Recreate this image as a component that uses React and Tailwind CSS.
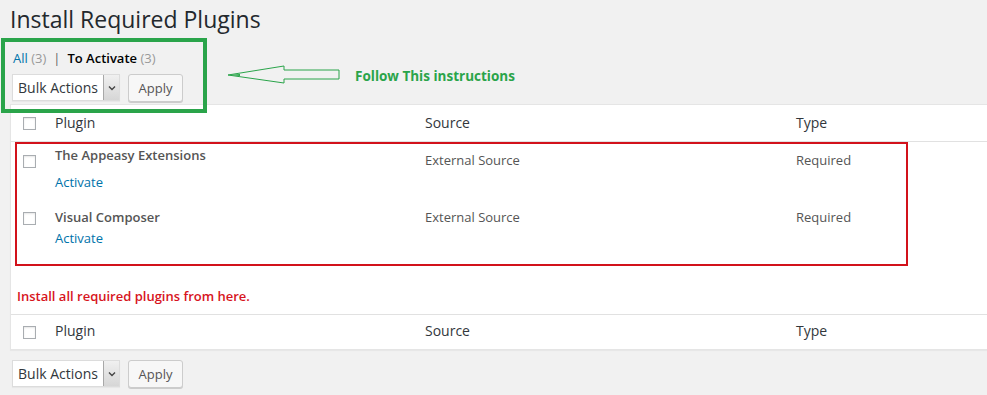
import React from "react";

function Checkbox({ className = "" }) {
  return (
    <div
      className={
        "w-[13px] h-[13px] bg-white border border-[#a9adb1] shadow-[inset_0_1px_2px_rgba(0,0,0,0.1)] " +
        className
      }
    />
  );
}

function BulkBar({ className = "" }) {
  return (
    <div className={"flex items-start pl-[12px] " + className}>
      <div className="flex h-[27px] w-[108px] bg-white border border-[#dcdcdc] shadow-[0_1px_1px_rgba(0,0,0,0.04)]">
        <div className="flex-1 pl-[5px] text-[14px] leading-[25px] text-[#32373c]">
          Bulk Actions
        </div>
        <div className="w-[16px] h-[25px] border-l border-[#a8a8a8] bg-gradient-to-b from-[#f0f0f0] to-[#d6d6d6] flex items-center justify-center">
          <svg width="8" height="6" viewBox="0 0 8 6">
            <path d="M1 1.5 L4 4.5 L7 1.5" fill="none" stroke="#444" strokeWidth="1.4" />
          </svg>
        </div>
      </div>
      <div className="ml-[8px] h-[28px] w-[55px] bg-[#f7f7f7] border border-[#cccccc] rounded-[3px] shadow-[0_1px_0_#ccc] text-[13px] leading-[26px] text-center text-[#555]">
        Apply
      </div>
    </div>
  );
}

export default function App() {
  return (
    <div className="relative w-[987px] h-[395px] overflow-hidden bg-[#f1f1f1] font-['Open_Sans',sans-serif]">
      <h1 className="pt-[5px] pl-[10px] text-[23px] leading-[29px] font-normal text-[#23282d]">
        Install Required Plugins
      </h1>

      <div className="mt-[14px] pl-[13px] text-[13px] leading-[20px] text-[#555]">
        <span className="text-[#0073aa]">All</span>{" "}
        <span className="text-[#999]">(3)</span>
        <span className="mx-[7px] text-[#666]">|</span>
        <span className="font-semibold text-[#000]">To Activate</span>{" "}
        <span className="text-[#999]">(3)</span>
      </div>

      <BulkBar className="mt-[6px]" />

      <div className="mt-[2px] ml-[10px] bg-white border-t border-l border-b border-[#e5e5e5] shadow-[0_1px_1px_rgba(0,0,0,0.04)] text-[#555]">
        {/* header */}
        <div className="grid grid-cols-[44px_370px_371px_1fr] h-[37px] border-b border-[#e1e1e1] text-[14px] leading-[20px] text-[#32373c]">
          <div className="pl-[12px] pt-[12px]">
            <Checkbox />
          </div>
          <div className="pt-[8px]">Plugin</div>
          <div className="pt-[8px]">Source</div>
          <div className="pt-[8px]">Type</div>
        </div>

        {/* row 1 */}
        <div className="grid grid-cols-[44px_370px_371px_1fr] h-[62px] text-[13px] leading-[20px]">
          <div className="pl-[12px] pt-[13px]">
            <Checkbox />
          </div>
          <div className="pt-[3px]">
            <div className="font-semibold text-[#555]">The Appeasy Extensions</div>
            <div className="mt-[7px] text-[#0073aa]">Activate</div>
          </div>
          <div className="pt-[8px]">External Source</div>
          <div className="pt-[8px]">Required</div>
        </div>

        {/* row 2 */}
        <div className="grid grid-cols-[44px_370px_371px_1fr] h-[62px] text-[13px] leading-[20px]">
          <div className="pl-[12px] pt-[8px]">
            <Checkbox />
          </div>
          <div className="pt-[3px]">
            <div className="font-semibold text-[#555]">Visual Composer</div>
            <div className="mt-[1px] text-[#0073aa]">Activate</div>
          </div>
          <div className="pt-[3px]">External Source</div>
          <div className="pt-[3px]">Required</div>
        </div>

        {/* note */}
        <div className="h-[48px] pt-[20px] pl-[6px] text-[13px] leading-[20px] font-semibold text-[#d7141d]">
          Install all required plugins from here.
        </div>

        {/* footer */}
        <div className="grid grid-cols-[44px_370px_371px_1fr] h-[35px] border-t border-[#e1e1e1] text-[14px] leading-[20px] text-[#32373c]">
          <div className="pl-[12px] pt-[11px]">
            <Checkbox />
          </div>
          <div className="pt-[6px]">Plugin</div>
          <div className="pt-[6px]">Source</div>
          <div className="pt-[6px]">Type</div>
        </div>
      </div>

      <BulkBar className="mt-[10px]" />

      {/* annotations */}
      <div className="absolute left-[1px] top-[38px] w-[206px] h-[75px] border-[4px] border-[#2aa44a]" />
      <div className="absolute left-[15px] top-[142px] w-[893px] h-[124px] border-2 border-[#d2121b]" />
      <svg
        className="absolute left-[226px] top-[64px]"
        width="116"
        height="22"
        viewBox="0 0 116 22"
      >
        <polygon
          points="2,11 58,2 58,6 113,6 113,15 58,15 58,19"
          fill="none"
          stroke="#2aa44a"
          strokeWidth="1"
        />
        <path d="M2 11 L14 10 L14 12 Z" fill="#2aa44a" />
      </svg>
      <div className="absolute left-[355px] top-[66px] text-[13.5px] leading-[20px] font-bold text-[#2aa44a]">
        Follow This instructions
      </div>
    </div>
  );
}
